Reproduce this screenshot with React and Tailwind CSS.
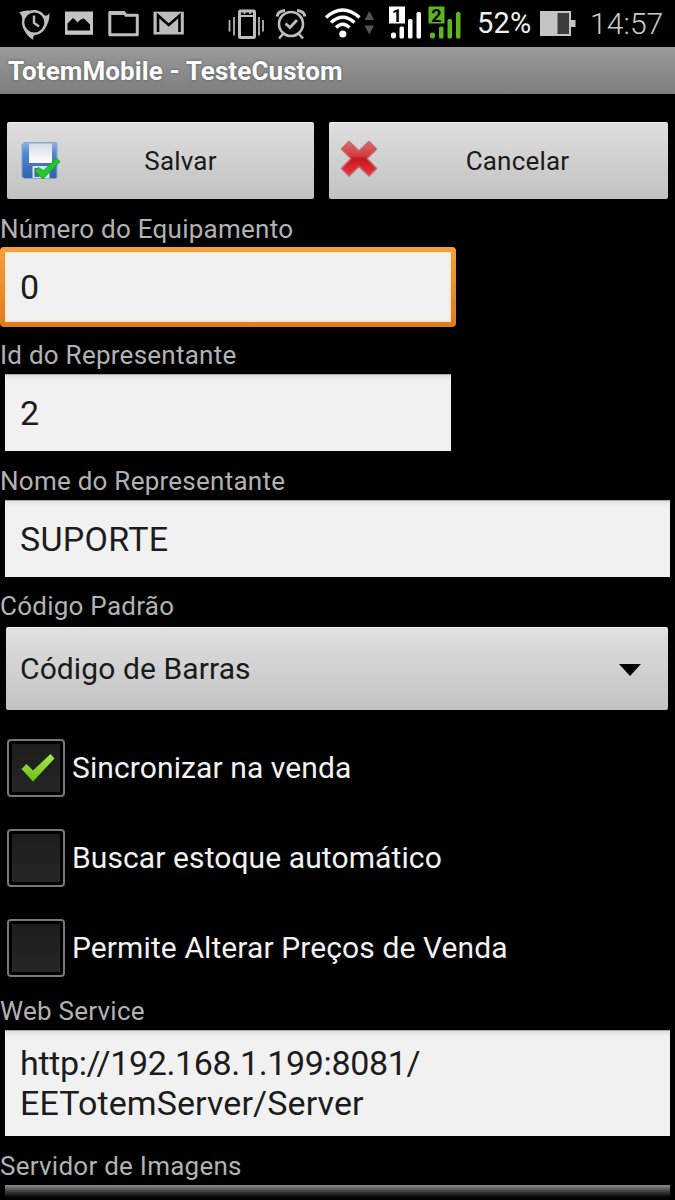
const statusIcon = "block shrink-0";

function StatusBar() {
  return (
    <header className="h-[47px] shrink-0 bg-black flex items-center">
      <svg className={statusIcon} width="470" height="47" viewBox="0 0 470 47" fill="none">
        {/* sync clock */}
        <g stroke="#bdbdbd" strokeWidth="2.4">
          <circle cx="34.3" cy="22.5" r="11.2" />
          <path d="M34 15.5V23l5 3.5" />
        </g>
        <g fill="#bdbdbd">
          <path d="M19 12.5Q27 9 34 11.5L26 15L22.5 22Q23 15.500 19 12.500Z" />
          <path d="M49.500 13Q50 23 43.500 30L45.500 22L43.500 15Q47 17 49.500 13Z" />
          <path d="M33.500 40Q26 36 23 27.500L28 32.500L36 34Q32 36 33.500 40Z" />
        </g>

        {/* picture */}
        <rect x="65" y="11.500" width="28" height="23.300" fill="#c4c4c4" />
        <path d="M67.500 30.500V23.500l5.500-5.500q2 1 4.500 4.500Q81 18.500 84 18.500l6 6v6Z" fill="#000" />

        {/* folder */}
        <path d="M109.800 34.800V12.500H124l2 2.800h11.300v19.500Z" stroke="#bdbdbd" strokeWidth="3" strokeLinejoin="round" />
        <path d="M109 11h15.500l2 4H109Z" fill="#bdbdbd" />

        {/* mail */}
        <rect x="153.500" y="11.700" width="30.300" height="22.800" fill="#bdbdbd" />
        <path d="M158 32V15.500l10.700 9.500L179.500 15.500v16.500" stroke="#000" strokeWidth="2.600" />

        {/* vibrate */}
        <g stroke="#bdbdbd" strokeWidth="2.200">
          <rect x="239.500" y="11" width="15" height="26.500" rx="1" strokeWidth="3" />
          <path d="M239 16h16M244.500 11v3M250 11v3" strokeWidth="1.800" />
          <path d="M229.500 20v11.500M234 17v18.500M259 17v18.500M263 20v11.500" strokeWidth="1.700" />
        </g>

        {/* alarm */}
        <g stroke="#bdbdbd" strokeWidth="2.600">
          <circle cx="291" cy="24" r="12" />
          <path d="M285.500 23.500l4.500 4 7-7.500" strokeWidth="2.800" />
          <path d="M283 34l-4 4.500M299 34l4 4.500" />
          <path d="M277 16.500q1-5.500 8-6M305 16.500q-1-5.500-8-6" strokeWidth="3" />
        </g>

        {/* wifi */}
        <g stroke="#fff" strokeWidth="3.400">
          <path d="M326 17.500Q342.700 2.500 359.500 17.500" />
          <path d="M331 22.500Q342.700 12 354.500 22.500" />
          <path d="M336 27.500Q342.700 21 349.500 27.500" />
        </g>
        <circle cx="342.800" cy="34" r="3.600" fill="#fff" />
        <path d="M364.500 20l5-9 4.500 9ZM364.500 25.500h9.500l-4.700 9Z" fill="#555" />

        {/* sim signals */}
        <g fill="#fff">
          <rect x="389" y="6.500" width="16" height="17" />
          <rect x="391" y="32.500" width="5" height="6" rx="2" />
          <rect x="399.500" y="26.500" width="4.500" height="12" rx="1.500" />
          <rect x="408" y="19" width="4.500" height="19.500" rx="1.500" />
          <rect x="416.500" y="12" width="4.500" height="26.500" rx="1.500" />
        </g>
        <g fill="#5fb51c">
          <rect x="428.500" y="6.500" width="16" height="17" />
          <rect x="430" y="32.500" width="5" height="6" rx="2" />
          <rect x="439" y="26.500" width="4.500" height="12" rx="1.500" />
          <rect x="447.500" y="19" width="4.500" height="19.500" rx="1.500" />
          <rect x="456" y="12" width="4.500" height="26.500" rx="1.500" />
        </g>
        <g fill="#000" fontFamily="Roboto" fontWeight="700" fontSize="18" textAnchor="middle">
          <text x="397" y="21.500">1</text>
          <text x="436.500" y="21.500">2</text>
        </g>
      </svg>
      <span className="ml-[7px] w-[56px] whitespace-nowrap text-[29px] leading-none tracking-[0.2px] text-[#f0f0f0]">52%</span>
      <svg className="ml-[7px] block shrink-0" width="36" height="25" viewBox="0 0 36 25">
        <path d="M0 0H31V9h4.500v7H31v9H0Z" fill="#c4c4c4" />
        <rect x="17.500" y="2" width="11.500" height="21" fill="#3c3c3c" />
      </svg>
      <span className="ml-[14px] whitespace-nowrap text-[30px] leading-none font-light tracking-[0.1px] text-[#cccccc]">14:57</span>
    </header>
  );
}

function SaveIcon() {
  return (
    <svg width="42" height="42" viewBox="0 0 42 42" className="block shrink-0">
      <defs>
        <linearGradient id="disk" x1="0" x2="0" y1="0" y2="1">
          <stop offset="0" stopColor="#8fb4e6" />
          <stop offset="0.3" stopColor="#4f87d3" />
          <stop offset="1" stopColor="#2f62ad" />
        </linearGradient>
        <linearGradient id="diskLabel" x1="0" x2="0" y1="0" y2="1">
          <stop offset="0" stopColor="#d6dae2" />
          <stop offset="1" stopColor="#ffffff" />
        </linearGradient>
      </defs>
      <path d="M4 2.500H36Q37 2.500 37 4V37Q37 38.500 35.500 38.500H4L2 36.500V4.500Z" fill="url(#disk)" stroke="#86a6d4" />
      <rect x="9" y="3.500" width="23" height="19.500" fill="url(#diskLabel)" />
      <rect x="12.500" y="26" width="17" height="12" fill="#d9e2ee" />
      <rect x="14.500" y="28" width="5" height="9" fill="#3d6aa8" />
      <path d="M14.800 30.800l3.700-3.300 5 3.200L36.500 18.300l3.500 3.200L22.800 39Z" fill="#22c92e" stroke="#14a821" strokeLinejoin="round" />
    </svg>
  );
}

function CancelIcon() {
  return (
    <svg width="40" height="40" viewBox="0 0 40 40" className="block shrink-0">
      <defs>
        <linearGradient id="cross" x1="0" x2="0" y1="0" y2="1">
          <stop offset="0" stopColor="#dd6a6c" />
          <stop offset="0.42" stopColor="#d33a3e" />
          <stop offset="0.5" stopColor="#c4161c" />
          <stop offset="1" stopColor="#ea3a40" />
        </linearGradient>
      </defs>
      <path
        d="M10 2.500L20 12 30 2.500 37.500 10 28 19.500 37.500 29.500 30 37 20 27.500 10 37 2.500 29.500 12 19.500 2.500 10Z"
        fill="url(#cross)" stroke="#c46466" strokeWidth="1.500" strokeLinejoin="round"
      />
    </svg>
  );
}

function Label({ children }) {
  return (
    <p className="h-[38px] leading-[38px] -mt-1 text-[26px] tracking-[0.25px] whitespace-nowrap text-[#b2b2b2]">
      {children}
    </p>
  );
}

function TextBox({ className, children }) {
  return (
    <div className={`ml-[5px] pl-[15px] pb-px flex items-center bg-[#f1f1f1] border-t border-[#a8a8a8] shadow-[inset_0_5px_5px_-3px_#dcdcdc] text-[34px] leading-[40px] tracking-[0.3px] text-[#1c1c1c] ${className}`}>
      {children}
    </div>
  );
}

function CheckRow({ checked, children }) {
  return (
    <div className="h-[90px] pl-[7px] flex items-center">
      <div className="size-[58px] shrink-0 border-[2.5px] border-[#777] rounded-[4px] p-[3px] bg-black">
        <div className="size-full bg-linear-to-b from-[#1d1d1d] to-[#262626] flex items-center justify-center">
          {checked && (
            <svg width="36" height="30" viewBox="0 0 36 30" className="block ml-[3px]">
              <defs>
                <linearGradient id="tick" x1="0" x2="0" y1="0" y2="1">
                  <stop offset="0" stopColor="#a8e84c" />
                  <stop offset="1" stopColor="#6cc016" />
                </linearGradient>
              </defs>
              <path d="M1.500 16L6.500 11L13 17.500L30.500 1L34.500 5.500L13 28.500Z" fill="url(#tick)" />
            </svg>
          )}
        </div>
      </div>
      <span className="ml-[7px] -mt-[2px] text-[30px] tracking-[0.1px] whitespace-nowrap text-[#f2f2f2]">{children}</span>
    </div>
  );
}

const checks = [
  { text: "Sincronizar na venda", checked: true },
  { text: "Buscar estoque automático", checked: false },
  { text: "Permite Alterar Preços de Venda", checked: false },
];

export default function App() {
  return (
    <div className="w-[675px] h-[1200px] overflow-hidden bg-black flex flex-col font-[Roboto,sans-serif]">
      <StatusBar />

      <div className="h-[47px] shrink-0 pl-[8px] pt-px flex items-center bg-linear-to-b from-[#9a9a9a] to-[#7e7e7e]">
        <h1 className="text-[26px] font-bold tracking-[0.1px] whitespace-nowrap text-white [text-shadow:0_0_3px_#555]">TotemMobile - TesteCustom</h1>
      </div>

      <main className="pt-[28px]">
        <div className="flex gap-[15px] pl-[7px] h-[77px] text-[26px] tracking-[0.2px] text-[#1a1a1a]">
          <button className="w-[307px] pl-[13px] flex items-center rounded-[2px] border-t border-[#eee] bg-linear-to-b from-[#dedede] to-[#c2c2c2]">
            <SaveIcon />
            <span className="flex-1 pt-px pr-[15px] text-center">Salvar</span>
          </button>
          <button className="w-[339px] pl-[10px] flex items-center rounded-[2px] border-t border-[#eee] bg-linear-to-b from-[#dedede] to-[#c2c2c2]">
            <span className="-mt-[5px]"><CancelIcon /></span>
            <span className="flex-1 pt-px pr-[12px] text-center">Cancelar</span>
          </button>
        </div>

        <div className="pt-[15px]">
          <Label>Número do Equipamento</Label>
          <div className="-mt-px w-[456px] h-[80px] rounded-[4px] p-[5px] bg-linear-to-b from-[#f3a03c] to-[#e07b1c]">
            <div className="h-full pl-[15px] flex items-center bg-[#f1f1f1] shadow-[inset_0_0_3px_1px_#fbe3c0] text-[34px] text-[#1c1c1c]">0</div>
          </div>
        </div>

        <div className="pt-[13px]">
          <Label>Id do Representante</Label>
          <TextBox className="w-[446px] h-[77px]">2</TextBox>
        </div>

        <div className="pt-[15px]">
          <Label>Nome do Representante</Label>
          <TextBox className="w-[665px] h-[77px]">SUPORTE</TextBox>
        </div>

        <div className="pt-[14px]">
          <Label>Código Padrão</Label>
          <div className="mt-[2px] ml-[6px] w-[662px] h-[83px] pl-[14px] pr-[27px] pb-px flex items-center justify-between rounded-[2px] border-t border-[#eee] bg-linear-to-b from-[#e0e0e0] to-[#c2c2c2]">
            <span className="text-[30px] tracking-[0.1px] text-[#1a1a1a]">Código de Barras</span>
            <svg className="mt-[3px]" width="22" height="12" viewBox="0 0 22 12"><path d="M0 0H22L11 12Z" fill="#000" /></svg>
          </div>
        </div>

        <div className="pt-[13px]">
          {checks.map((c) => (
            <CheckRow key={c.text} checked={c.checked}>{c.text}</CheckRow>
          ))}
        </div>

        <div className="pt-[3px]">
          <Label>Web Service</Label>
          <TextBox className="w-[665px] h-[106px]">
            <p><span className="tracking-[-0.35px]">http://192.168.1.199:8081/</span><br /><span className="tracking-[0.1px]">EETotemServer/Server</span></p>
          </TextBox>
        </div>

        <div className="pt-[15px]">
          <Label>Servidor de Imagens</Label>
          <div className="ml-[5px] w-[665px] h-[15px] bg-linear-to-b from-[#8c8c8c] to-black" />
        </div>
      </main>
    </div>
  );
}
